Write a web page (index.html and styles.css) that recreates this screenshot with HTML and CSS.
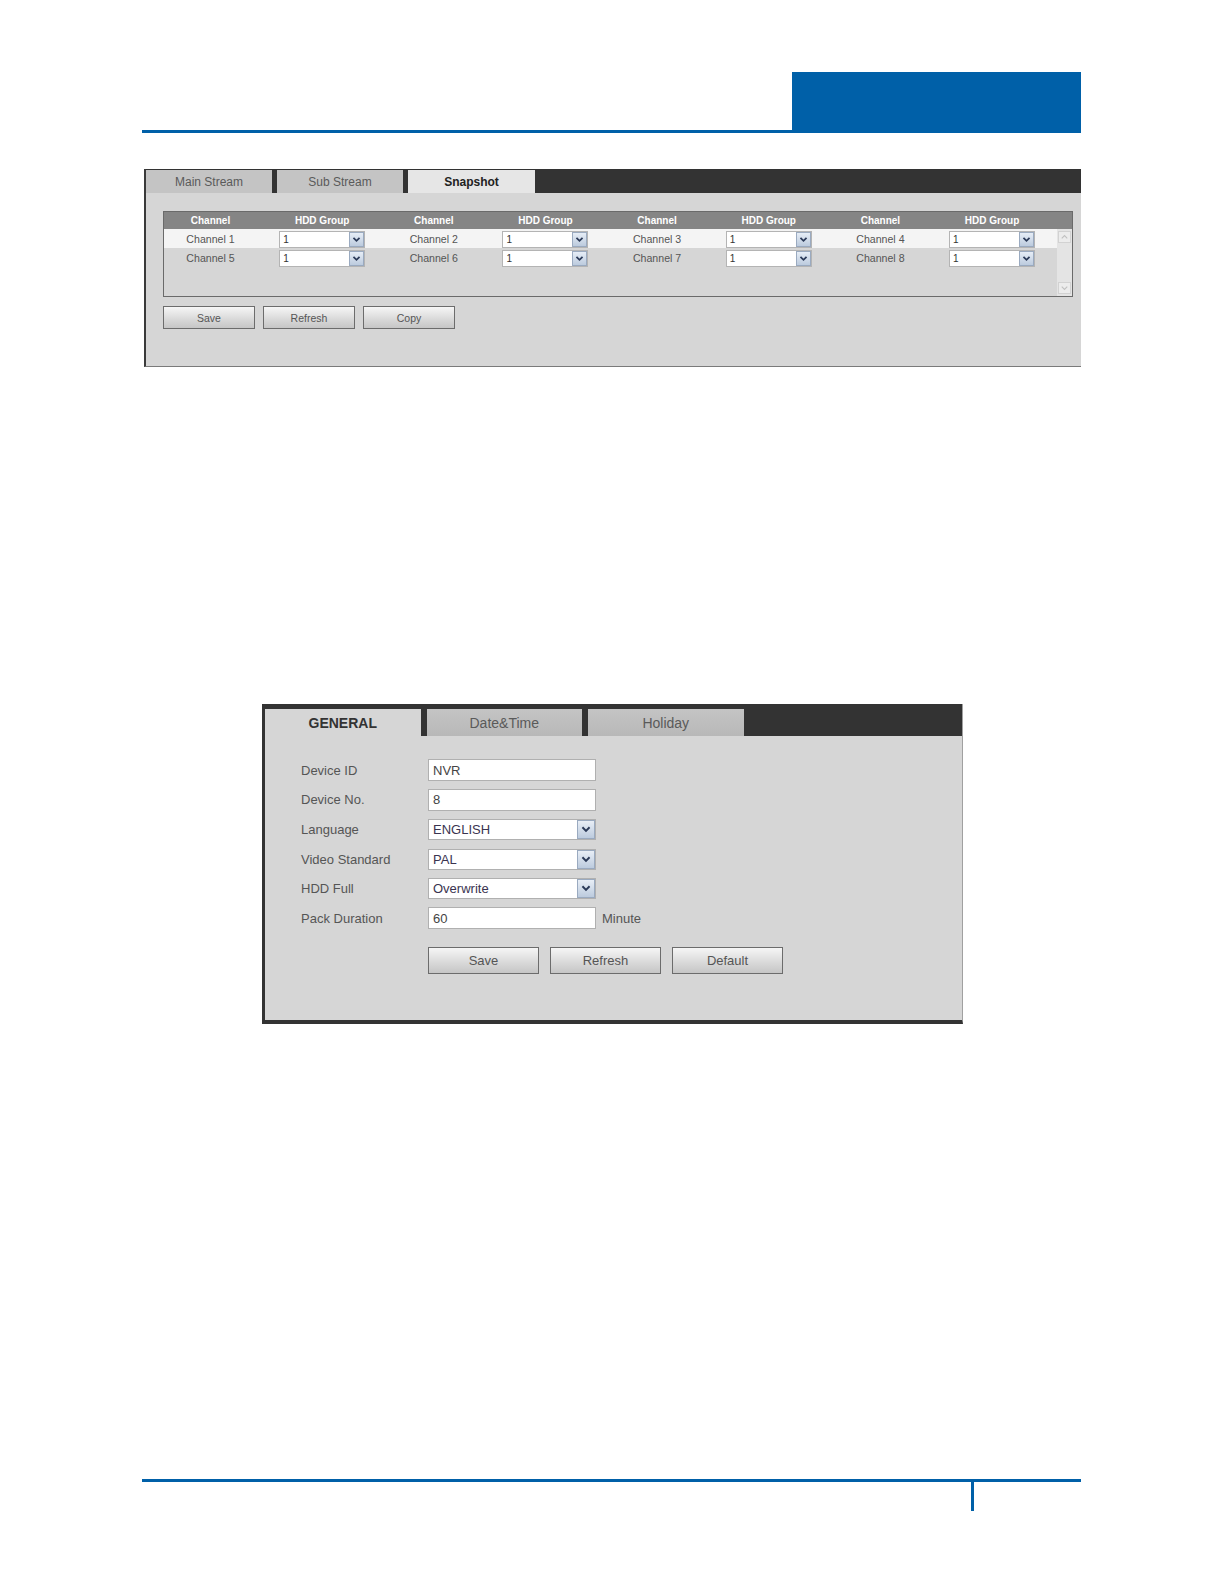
FILE: index.html
```html
<!DOCTYPE html>
<html>
<head>
<meta charset="utf-8">
<title>Settings</title>
<link rel="stylesheet" href="styles.css">
</head>
<body>
<div class="page">
  <header class="head">
    <div class="head-line"></div>
    <div class="head-block"></div>
  </header>

  <section class="panel1">
    <div class="tabbar1">
      <div class="tab1">Main Stream</div>
      <div class="tab1">Sub Stream</div>
      <div class="tab1 active">Snapshot</div>
    </div>
    <div class="tbox">
      <div class="thead">
        <div class="c-ch">Channel</div><div class="c-hdd">HDD Group</div>
        <div class="c-ch">Channel</div><div class="c-hdd">HDD Group</div>
        <div class="c-ch">Channel</div><div class="c-hdd">HDD Group</div>
        <div class="c-ch">Channel</div><div class="c-hdd">HDD Group</div>
        <div class="c-fill"></div>
      </div>
      <div class="tbody">
        <div class="rows">
          <div class="trow light">
            <div class="c-ch">Channel 1</div><div class="c-hdd"><div class="sel"><span>1</span><i class="arr"><svg viewBox="0 0 15 15"><polyline points="4,5.5 7.5,9 11,5.5"/></svg></i></div></div>
            <div class="c-ch">Channel 2</div><div class="c-hdd"><div class="sel"><span>1</span><i class="arr"><svg viewBox="0 0 15 15"><polyline points="4,5.5 7.5,9 11,5.5"/></svg></i></div></div>
            <div class="c-ch">Channel 3</div><div class="c-hdd"><div class="sel"><span>1</span><i class="arr"><svg viewBox="0 0 15 15"><polyline points="4,5.5 7.5,9 11,5.5"/></svg></i></div></div>
            <div class="c-ch">Channel 4</div><div class="c-hdd"><div class="sel"><span>1</span><i class="arr"><svg viewBox="0 0 15 15"><polyline points="4,5.5 7.5,9 11,5.5"/></svg></i></div></div>
          </div>
          <div class="trow">
            <div class="c-ch">Channel 5</div><div class="c-hdd"><div class="sel"><span>1</span><i class="arr"><svg viewBox="0 0 15 15"><polyline points="4,5.5 7.5,9 11,5.5"/></svg></i></div></div>
            <div class="c-ch">Channel 6</div><div class="c-hdd"><div class="sel"><span>1</span><i class="arr"><svg viewBox="0 0 15 15"><polyline points="4,5.5 7.5,9 11,5.5"/></svg></i></div></div>
            <div class="c-ch">Channel 7</div><div class="c-hdd"><div class="sel"><span>1</span><i class="arr"><svg viewBox="0 0 15 15"><polyline points="4,5.5 7.5,9 11,5.5"/></svg></i></div></div>
            <div class="c-ch">Channel 8</div><div class="c-hdd"><div class="sel"><span>1</span><i class="arr"><svg viewBox="0 0 15 15"><polyline points="4,5.5 7.5,9 11,5.5"/></svg></i></div></div>
          </div>
        </div>
        <div class="scroll">
          <div class="sarrow"><svg viewBox="0 0 12 10"><polyline points="3,6.5 6,3.5 9,6.5"/></svg></div>
          <div class="sarrow"><svg viewBox="0 0 12 10"><polyline points="3,3.5 6,6.5 9,3.5"/></svg></div>
        </div>
      </div>
    </div>
    <div class="btns1">
      <div class="btn1">Save</div>
      <div class="btn1">Refresh</div>
      <div class="btn1">Copy</div>
    </div>
  </section>

  <section class="panel2">
    <div class="tabbar2">
      <div class="tab2 active">GENERAL</div>
      <div class="tab2">Date&amp;Time</div>
      <div class="tab2">Holiday</div>
    </div>
    <div class="form">
      <div class="frow"><div class="lbl">Device ID</div><div class="inp">NVR</div></div>
      <div class="frow"><div class="lbl">Device No.</div><div class="inp">8</div></div>
      <div class="frow"><div class="lbl">Language</div><div class="inp dd"><span class="ddv">ENGLISH</span><i class="arr2"><svg viewBox="0 0 18 18"><polyline points="5,6.5 9,10.5 13,6.5"/></svg></i></div></div>
      <div class="frow"><div class="lbl">Video Standard</div><div class="inp dd"><span class="ddv">PAL</span><i class="arr2"><svg viewBox="0 0 18 18"><polyline points="5,6.5 9,10.5 13,6.5"/></svg></i></div></div>
      <div class="frow"><div class="lbl">HDD Full</div><div class="inp dd"><span class="ddv">Overwrite</span><i class="arr2"><svg viewBox="0 0 18 18"><polyline points="5,6.5 9,10.5 13,6.5"/></svg></i></div></div>
      <div class="frow"><div class="lbl">Pack Duration</div><div class="inp">60</div><div class="unit">Minute</div></div>
    </div>
    <div class="btns2">
      <div class="btn2">Save</div>
      <div class="btn2">Refresh</div>
      <div class="btn2">Default</div>
    </div>
  </section>

  <footer class="foot">
    <div class="foot-line"></div>
    <div class="foot-tick"></div>
  </footer>
</div>
</body>
</html>
```

FILE: styles.css
```css
* { box-sizing: border-box; }
html, body { margin: 0; padding: 0; background: #ffffff; }
body { font-family: "Liberation Sans", Arial, sans-serif; color: #555; }
.page { width: 1224px; min-height: 1584px; padding-top: 72px; }

/* header */
.head { display: flex; align-items: flex-end; margin-left: 142px; width: 939px; }
.head-line { flex: 1; height: 3px; background: #0060a8; }
.head-block { width: 289px; height: 61px; background: #0060a8; }

/* panel 1 */
.panel1 {
  margin-top: 36px; margin-left: 144px; width: 937px;
  background: #d6d6d6; border-left: 2px solid #3a3a3a; border-bottom: 1px solid #7a7a7a;
}
.tabbar1 { height: 24px; background: #333333; display: flex; gap: 5px; padding-top: 1px; }
.tab1 {
  width: 126px; height: 23px; background: #c4c4c4; color: #5a5a5a;
  font-size: 12px; display: flex; align-items: center; justify-content: center;
}
.tab1.active { width: 127px; background: #e6e6e6; color: #222; font-weight: bold; }

.tbox { margin: 18px 0 0 17px; width: 910px; height: 86px; border: 1px solid #6a6a6a; }
.thead { display: flex; height: 17px; background: #858585; color: #fff; font-weight: bold; font-size: 10px; }
.thead > div { display: flex; align-items: center; justify-content: center; }
.c-ch { width: 93px; flex: none; }
.c-hdd { width: 130.3px; flex: none; }
.c-fill { width: 15px; flex: none; }
.tbody { display: flex; height: 67px; }
.rows { width: 893px; }
.trow { display: flex; height: 19px; font-size: 10.6px; color: #555; }
.trow.light { background: #f4f4f4; }
.trow > div { display: flex; align-items: center; justify-content: center; }
.trow .c-hdd { align-items: flex-end; }
.sel {
  width: 86px; height: 17px; background: #fff; border: 1px solid #b4b4b4;
  display: flex; align-items: center; justify-content: space-between; padding-left: 3px;
  color: #333; font-size: 10px;
}
.arr {
  width: 15px; height: 15px; display: block;
  background: linear-gradient(#e6edf6, #bccbde); border: 1px solid #9aaac0;
}
.arr svg { width: 13px; height: 13px; display: block; }
.arr polyline { fill: none; stroke: #2b3a58; stroke-width: 2; }
.scroll {
  width: 15px; background: #e4e4e4; display: flex; flex-direction: column;
  justify-content: space-between; padding: 2px 1px;
}
.sarrow { height: 12px; background: #ececec; border: 1px solid #d2d2d2; }
.sarrow svg { width: 11px; height: 10px; display: block; }
.sarrow polyline { fill: none; stroke: #c0c0c0; stroke-width: 1.2; }

.btns1 { display: flex; gap: 8px; margin: 9px 0 37px 17px; }
.btn1 {
  width: 92px; height: 23px; border: 1px solid #6c6c6c;
  background: linear-gradient(#f6f6f6, #d8d8d8 60%, #c6c6c6);
  display: flex; align-items: center; justify-content: center; font-size: 10.5px; color: #555;
}

/* panel 2 */
.panel2 {
  margin-top: 337px; margin-left: 262px; width: 701px;
  background: #d6d6d6; border-left: 3px solid #333; border-right: 1px solid #a0a0a0; border-bottom: 4px solid #333;
}
.tabbar2 { height: 32px; background: #333333; display: flex; gap: 6px; padding-top: 5px; }
.tab2 {
  width: 155.5px; height: 27px; background: linear-gradient(#c4c4c4, #b8b8b8); color: #5a5a5a;
  font-size: 14px; display: flex; align-items: center; justify-content: center;
}
.tab2.active { background: #d6d6d6; color: #333; font-weight: bold; }

.form { margin: 23px 0 0 36px; display: flex; flex-direction: column; gap: 7.7px; }
.frow { display: flex; align-items: center; height: 22px; }
.lbl { width: 127px; font-size: 13px; color: #555; }
.inp {
  width: 168px; height: 22px; background: #fff; border: 1px solid #b0b0b0;
  font-size: 13px; color: #444; padding-left: 4px; display: flex; align-items: center;
}
.inp.dd { justify-content: space-between; height: 21px; }
.ddv { color: #3a3450; }
.arr2 {
  width: 18px; height: 19px; display: block;
  background: linear-gradient(#e8eef6, #bccbde); border: 1px solid #9aaac0;
}
.arr2 svg { width: 16px; height: 17px; display: block; }
.arr2 polyline { fill: none; stroke: #2b3a58; stroke-width: 2.2; }
.unit { margin-left: 6px; font-size: 13px; color: #555; }

.btns2 { display: flex; gap: 11px; margin: 18px 0 46px 163px; }
.btn2 {
  width: 111px; height: 27px; border: 1px solid #6c6c6c;
  background: linear-gradient(#f6f6f6, #d8d8d8 60%, #c6c6c6);
  display: flex; align-items: center; justify-content: center; font-size: 13px; color: #555;
}

/* footer */
.foot { margin-top: 455px; margin-left: 142px; width: 939px; }
.foot-line { height: 3px; background: #0060a8; }
.foot-tick { margin-left: 829px; width: 3px; height: 29px; background: #0060a8; }
```
